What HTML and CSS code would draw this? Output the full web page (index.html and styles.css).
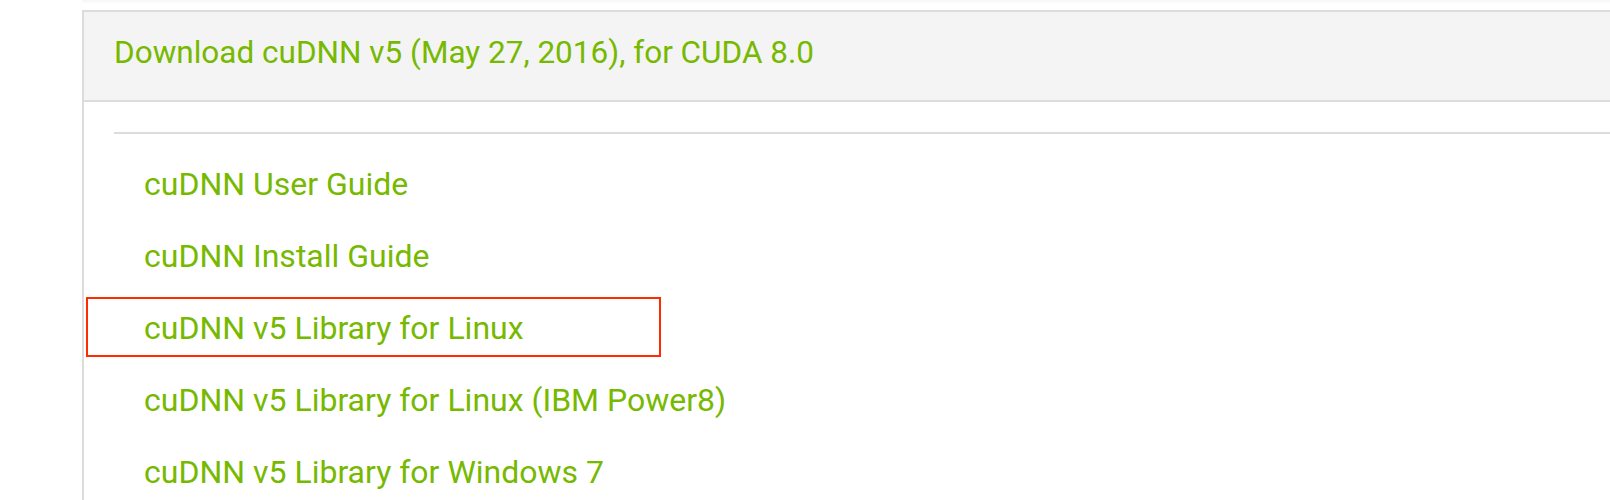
FILE: index.html
```html
<!DOCTYPE html>
<html lang="en">
<head>
<meta charset="utf-8">
<title>cuDNN Download</title>
<link rel="stylesheet" href="styles.css">
</head>
<body>
<div class="page">
  <div class="prev-shadow"></div>
  <section class="panel">
    <header class="panel-head">
      <a class="panel-title" href="#">Download cuDNN v5 (May 27, 2016), for CUDA 8.0</a>
    </header>
    <div class="panel-body">
      <hr class="rule">
      <ul class="links">
        <li class="link-item"><a href="#">cuDNN User Guide</a></li>
        <li class="link-item"><a href="#">cuDNN Install Guide</a></li>
        <li class="link-item highlighted"><a href="#">cuDNN v5 Library for Linux</a></li>
        <li class="link-item"><a href="#">cuDNN v5 Library for Linux (IBM Power8)</a></li>
        <li class="link-item"><a href="#">cuDNN v5 Library for Windows 7</a></li>
      </ul>
    </div>
  </section>
</div>
</body>
</html>
```

FILE: styles.css
```css
html, body {
  margin: 0;
  padding: 0;
  background: #ffffff;
  overflow: hidden;
}

body {
  font-family: Roboto, "Liberation Sans", Arial, sans-serif;
  height: 500px;
}

.page {
  padding-left: 82px;
  height: 500px;
  overflow: hidden;
}

.prev-shadow {
  height: 3px;
  margin-bottom: 7px;
  background: linear-gradient(#f6f6f6, #fcfcfc);
  margin-right: -20px;
}

.panel {
  border-left: 2px solid #dcdcdc;
  border-top: 2px solid #dcdcdc;
  margin-right: -40px;
  height: 488px;
  overflow: hidden;
  background: #ffffff;
}

.panel-head {
  background: #f4f4f4;
  border-bottom: 2px solid #dcdcdc;
  padding: 22px 0 29px 30px;
  font-size: 31.5px;
  line-height: 37px;
}

.panel-title {
  color: #76b900;
  text-decoration: none;
}

.panel-body {
  padding-top: 30px;
}

.rule {
  margin: 0 0 14px 30px;
  border: 0;
  height: 2px;
  background: #dcdcdc;
}

.links {
  list-style: none;
  margin: 0;
  padding: 0;
}

.link-item {
  position: relative;
  padding-left: 60px;
  font-size: 32px;
  line-height: 72px;
}

.link-item a {
  color: #76b900;
  text-decoration: none;
}

.highlighted::after {
  content: "";
  position: absolute;
  left: 2px;
  top: 5px;
  width: 571px;
  height: 56px;
  border: 2px solid #ff2a00;
  pointer-events: none;
}
```
